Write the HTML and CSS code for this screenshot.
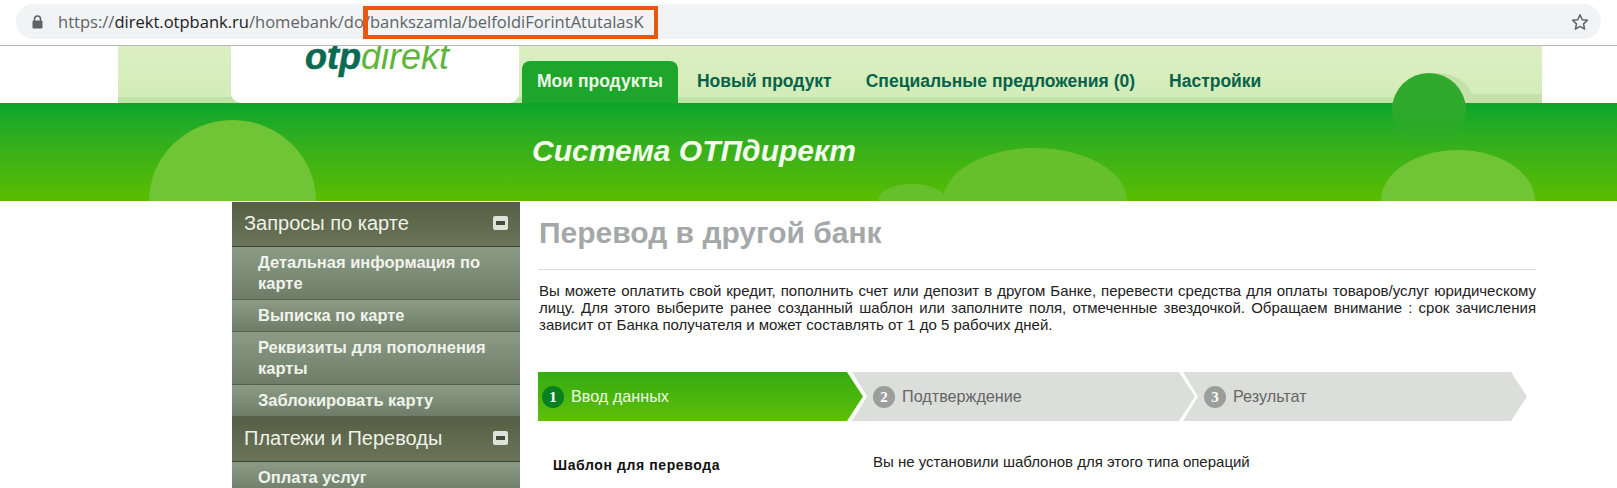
FILE: index.html
```html
<!DOCTYPE html>
<html>
<head>
    <title>Система ОТПдирект</title>
    <link rel="stylesheet" href="styles.css">
</head>
<body>
    <div class="browser-bar">
        <div class="address">
            <svg class="lock" width="11" height="14" viewBox="0 0 11 14"><path d="M2.5 6V4a3 3 0 0 1 6 0v2" fill="none" stroke="#5f6368" stroke-width="1.5"/><rect x="0.5" y="5.5" width="10" height="8" rx="1" fill="#5f6368"/></svg>
            <span class="url">https://<b>direkt.otpbank.ru</b>/homebank/do/bankszamla/belfoldiForintAtutalasK</span>
            <svg class="star" width="18" height="18" viewBox="0 0 18 18"><path d="M9 1.8l2.2 4.9 5.3.6-4 3.6 1.1 5.2L9 13.4l-4.6 2.7 1.1-5.2-4-3.6 5.3-.6z" fill="none" stroke="#5f6368" stroke-width="1.5" stroke-linejoin="round"/></svg>
        </div>
        <div class="url-mark"></div>
    </div>

    <div class="top">
        <div class="top-inner">
            <div class="logo"><span class="logo-otp">otp</span><span class="logo-direkt">direkt</span></div>
            <ul class="nav">
                <li class="active">Мои продукты</li>
                <li>Новый продукт</li>
                <li>Специальные предложения (0)</li>
                <li>Настройки</li>
            </ul>
            <div class="strip-shade"></div>
            <div class="bump-shade"></div>
        </div>
    </div>

    <div class="band">
        <div class="bump bump-a"></div>
        <div class="bump bump-b"></div>
        <div class="bump bump-c"></div>
        <div class="bump bump-d"></div>
        <div class="bump-dark"></div>
        <h2 class="band-title">Система ОТПдирект</h2>
    </div>

    <div class="main">
        <div class="sidebar">
            <div class="side-head">Запросы по карте<span class="minus"></span></div>
            <a class="side-item">Детальная информация по карте</a>
            <a class="side-item">Выписка по карте</a>
            <a class="side-item">Реквизиты для пополнения карты</a>
            <a class="side-item">Заблокировать карту</a>
            <div class="side-head">Платежи и Переводы<span class="minus"></span></div>
            <a class="side-item">Оплата услуг</a>
        </div>

        <div class="content">
            <h1 class="page-title">Перевод в другой банк</h1>
            <p class="intro">Вы можете оплатить свой кредит, пополнить счет или депозит в другом Банке, перевести средства для оплаты товаров/услуг юридическому лицу. Для этого выберите ранее созданный шаблон или заполните поля, отмеченные звездочкой. Обращаем внимание : срок зачисления зависит от Банка получателя и может составлять от 1 до 5 рабочих дней.</p>

            <div class="steps">
                <div class="step step-first current"><span class="num">1</span>Ввод данных</div>
                <div class="step step-second"><span class="num">2</span>Подтверждение</div>
                <div class="step step-third"><span class="num">3</span>Результат</div>
            </div>

            <div class="form-row">
                <div class="form-label">Шаблон для перевода</div>
                <div class="form-value">Вы не установили шаблонов для этого типа операций</div>
            </div>
        </div>
    </div>
</body>
</html>
```

FILE: styles.css
```css
html, body {
    margin: 0;
    height: 100%;
    overflow: hidden;
    background: #fff;
}

body {
    font-family: "Liberation Sans", Arial, sans-serif;
    color: #222;
}

/* browser chrome */
.browser-bar {
    position: relative;
    height: 46px;
    padding: 4px 16px 0;
    box-sizing: border-box;
    border-bottom: 1px solid #b5b8b6;
    background: #fff;
}

.address {
    display: flex;
    align-items: center;
    height: 35px;
    padding: 0 12px 0 16px;
    background: #f1f3f4;
    border-radius: 18px;
}

.lock {
    margin-right: 15px;
}

.url {
    flex: 1;
    font-family: "Open Sans", sans-serif;
    font-size: 16.55px;
    color: #5f6368;
}

.url b {
    font-weight: 400;
    color: #202124;
}

.url-mark {
    position: absolute;
    left: 363px;
    top: 6px;
    width: 295px;
    height: 33px;
    box-sizing: border-box;
    border: 5px solid #e8590f;
    border-width: 4px 4px 4px 5px;
}

/* logo and tabs */
.top {
    height: 57px;
    padding-left: 118px;
}

.top-inner {
    position: relative;
    display: flex;
    width: 1424px;
    height: 57px;
    background: linear-gradient(#dcefc2 0, #d3ecb8 51px, #bfe2a6 51px);
}

.logo {
    position: relative;
    z-index: 1;
    width: 288px;
    height: 57px;
    margin-left: 113px;
    padding-left: 4px;
    box-sizing: border-box;
    background: #fff;
    border-radius: 0 0 10px 10px;
    text-align: center;
    line-height: 22px;
    overflow: hidden;
    font-size: 36px;
    font-style: italic;
    white-space: nowrap;
}

.logo-otp {
    font-weight: 700;
    color: #0b6b52;
    -webkit-text-stroke: 0.6px #0b6b52;
}

.logo-direkt {
    color: #5db63a;
}

.nav {
    position: relative;
    z-index: 1;
    display: flex;
    align-items: flex-end;
    list-style: none;
    margin: 0 0 0 3px;
    padding: 0;
    font-size: 17.5px;
    font-weight: 700;
    color: #06624a;
}

.nav li {
    padding: 0 15px;
    height: 42px;
    line-height: 41px;
    margin-right: 4px;
    white-space: nowrap;
}

.nav li.active {
    color: #eef8e6;
    background: #1ea52c;
    border-radius: 8px 8px 0 0;
}

.bump-shade {
    position: absolute;
    left: 1284px;
    top: 27px;
    width: 74px;
    height: 74px;
    background: #c5e0ab;
    border-radius: 50%;
}

.strip-shade {
    position: absolute;
    left: 1320px;
    right: 0;
    top: 48px;
    height: 9px;
    background: #c5e0ab;
}

/* green band */
.band {
    position: relative;
    height: 98px;
    background: linear-gradient(#0ca52c, #2fae20 35%, #5bbd00);
}

.bump {
    position: absolute;
    bottom: 0;
    background: #6fc535;
    border-radius: 50% 50% 0 0 / 100% 100% 0 0;
}

.bump-a {
    left: 149px;
    width: 167px;
    height: 81px;
}

.bump-b {
    left: 943px;
    width: 184px;
    height: 53px;
    background: #66c02c;
}

.bump-c {
    left: 878px;
    width: 68px;
    height: 17px;
    background: #66c02c;
}

.bump-d {
    left: 1381px;
    width: 154px;
    height: 51px;
}

.bump-dark {
    position: absolute;
    left: 1392px;
    top: -30px;
    width: 74px;
    height: 74px;
    background: linear-gradient(#30a92c 50%, rgba(48, 169, 44, 0));
    border-radius: 50%;
}

.band-title {
    position: relative;
    margin: 0;
    padding: 31px 0 0 532px;
    font-size: 30px;
    font-style: italic;
    font-weight: 700;
    color: #f4fbee;
}

/* left menu and content */
.main {
    display: flex;
    padding: 1px 0 0 232px;
}

.sidebar {
    flex: none;
    width: 288px;
}

.side-head {
    display: flex;
    justify-content: space-between;
    align-items: center;
    height: 45px;
    padding: 0 12px 2px 12px;
    background: linear-gradient(#565e44, #6b7358);
    border-bottom: 1px solid #3c4430;
    box-sizing: border-box;
    font-size: 20px;
    color: #eef2e8;
}

.minus {
    position: relative;
    width: 15px;
    height: 14px;
    background: #dde3d9;
    border-radius: 2px;
}

.minus::after {
    content: "";
    position: absolute;
    left: 3px;
    right: 3px;
    top: 5px;
    height: 4px;
    background: #454d37;
}

.side-item {
    display: block;
    padding: 5px 12px 5px 26px;
    background: linear-gradient(#8b9b85, #6f7d68);
    border-bottom: 1px solid #56604f;
    font-size: 16.5px;
    font-weight: 700;
    line-height: 21px;
    color: #f0f3ec;
}

.content {
    flex: none;
    width: 998px;
    margin-left: 18px;
}

.page-title {
    margin: 0;
    height: 68px;
    padding: 13px 0 0 1px;
    box-sizing: border-box;
    border-bottom: 1px solid #dcdedc;
    font-size: 30px;
    line-height: 36px;
    color: #a5a8a8;
}

.intro {
    margin: 12px 0 0;
    padding-left: 1px;
    font-size: 15px;
    line-height: 17px;
    text-align: justify;
    color: #222;
}

/* wizard steps */
.steps {
    display: flex;
    margin-top: 39px;
}

.step {
    display: flex;
    align-items: center;
    height: 49px;
    box-sizing: border-box;
    font-size: 16.2px;
    color: #666;
    background: #dbdedb;
    clip-path: polygon(0 0, calc(100% - 16px) 0, 100% 50%, calc(100% - 16px) 100%, 0 100%, 15px 50%);
}

.step-first {
    width: 325px;
    padding-left: 4px;
    background: linear-gradient(#35ab12, #5fbf08);
    color: #eef8e6;
    clip-path: polygon(0 0, calc(100% - 16px) 0, 100% 50%, calc(100% - 16px) 100%, 0 100%);
}

.step-second {
    width: 343px;
    margin-left: -11px;
    padding-left: 21px;
}

.step-third {
    width: 344px;
    margin-left: -12px;
    padding-left: 21px;
}

.num {
    flex: none;
    width: 22px;
    height: 22px;
    margin-right: 7px;
    border-radius: 50%;
    background: #9c9e9c;
    color: #fff;
    font-family: "Liberation Serif", serif;
    font-weight: 700;
    font-size: 15px;
    line-height: 22px;
    text-align: center;
}

.current .num {
    background: #08801f;
}

/* form */
.form-row {
    display: flex;
    margin-top: 32px;
    font-size: 15px;
}

.form-label {
    width: 335px;
    padding: 4px 0 0 15px;
    box-sizing: border-box;
    font-size: 14px;
    font-weight: 700;
    letter-spacing: 0.6px;
    color: #111;
}

.form-value {
    color: #222;
}
```
